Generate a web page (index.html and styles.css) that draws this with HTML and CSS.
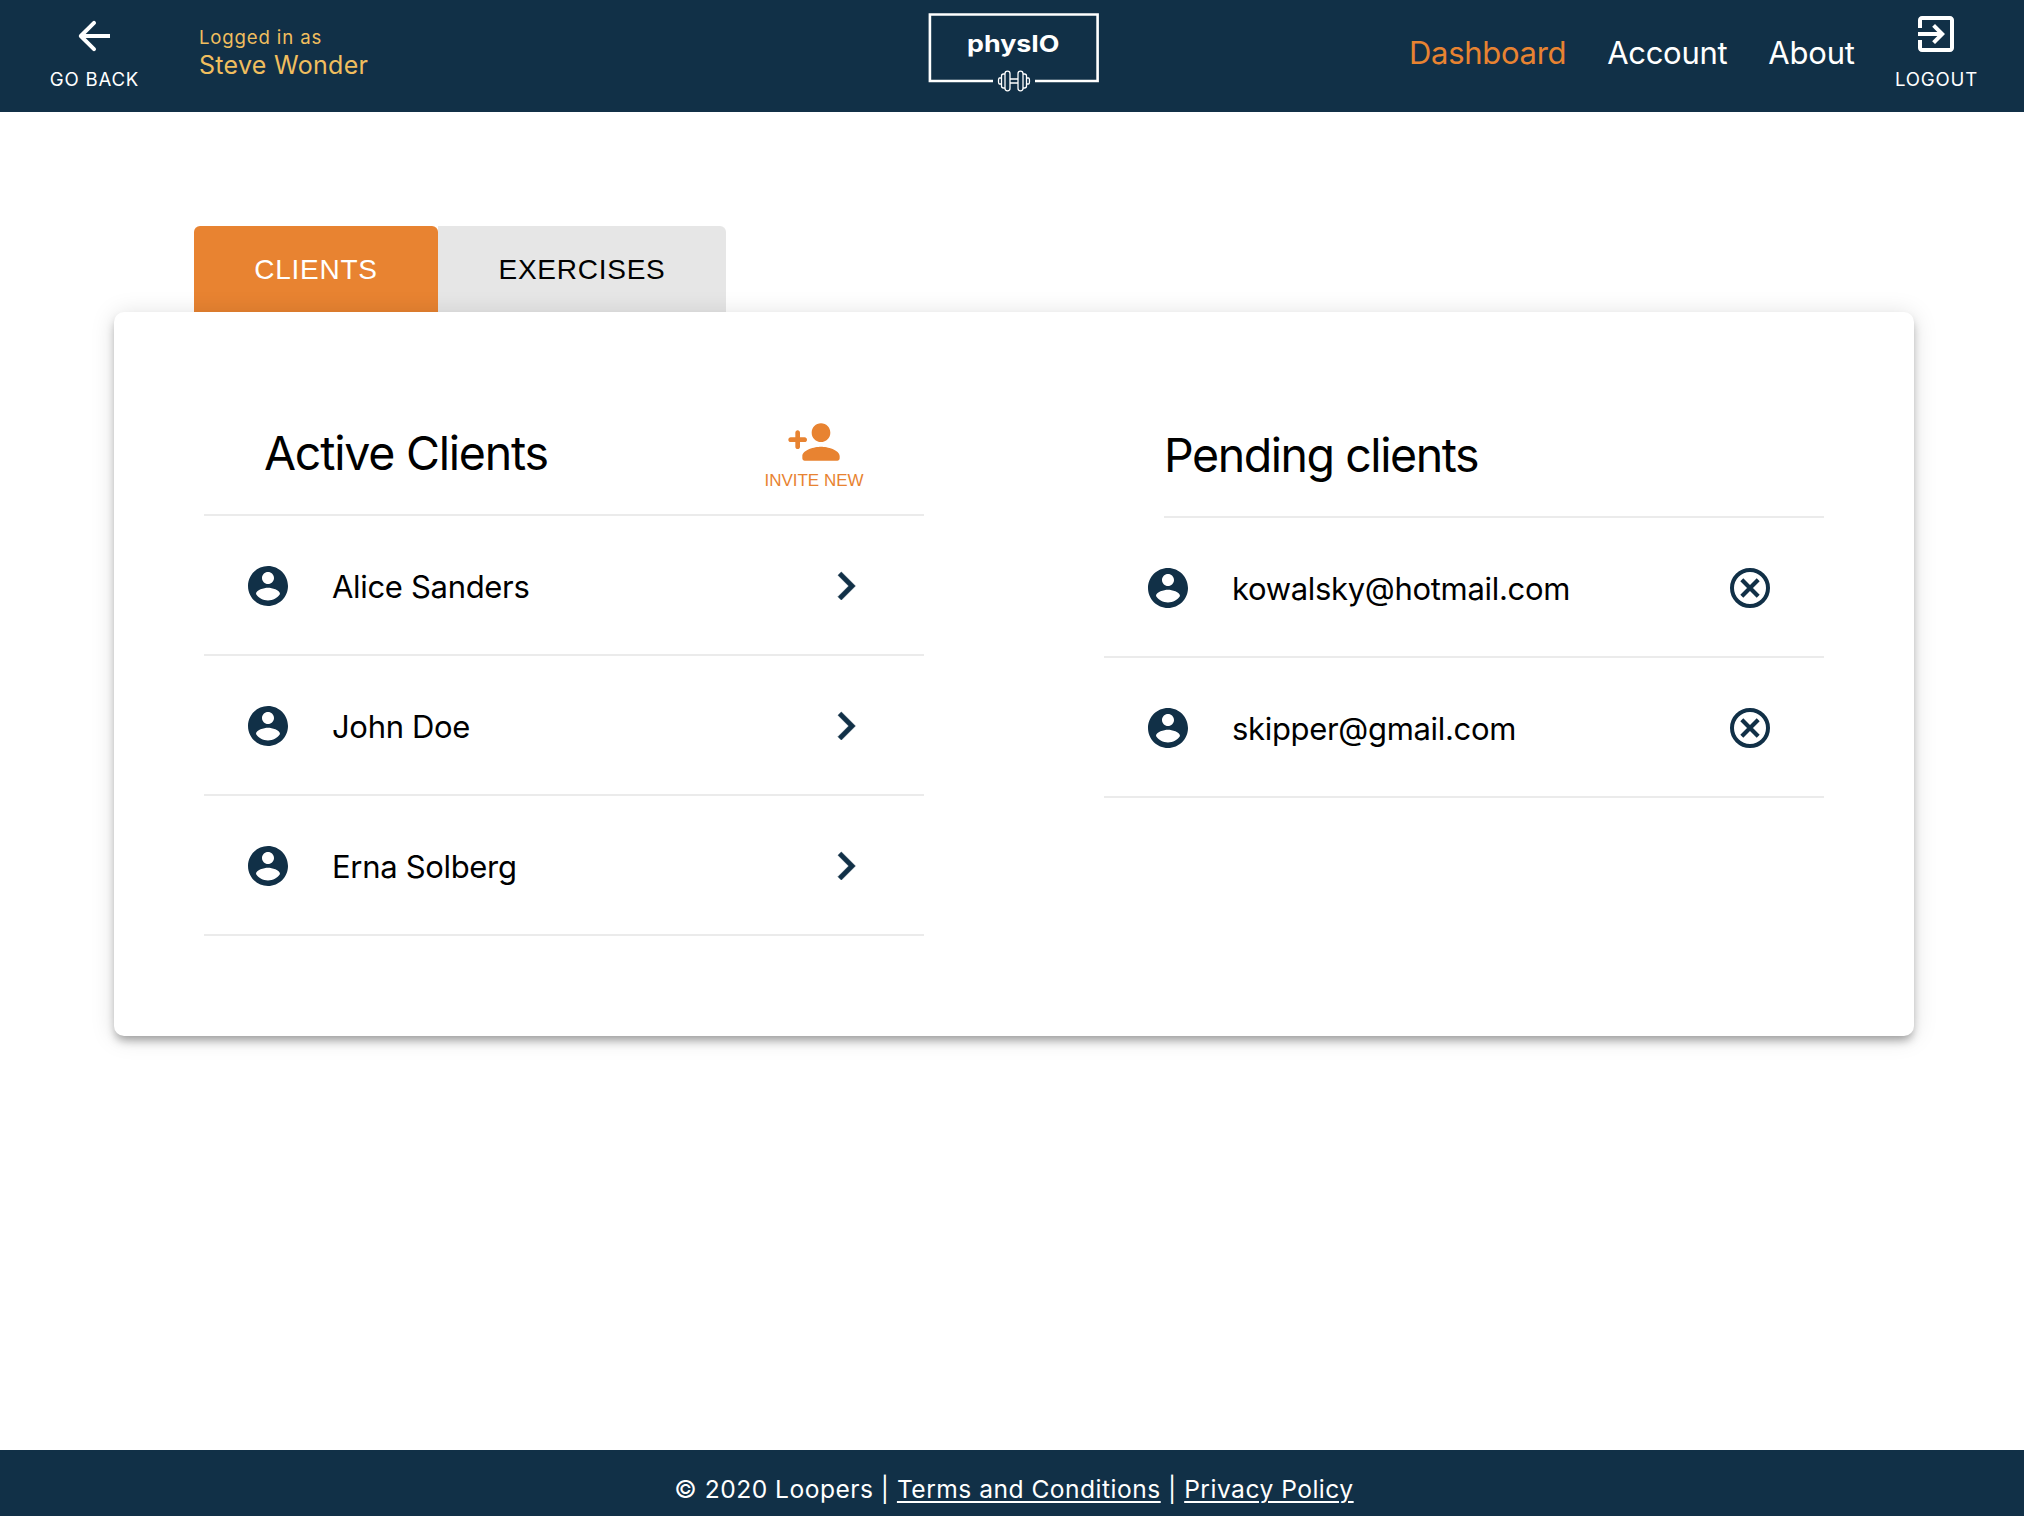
FILE: index.html
```html
<!DOCTYPE html>
<html lang="en">
<head>
<meta charset="utf-8">
<title>physIO – Dashboard</title>
<link rel="stylesheet" href="styles.css">
</head>
<body>
<svg width="0" height="0" class="sprite" aria-hidden="true">
  <symbol id="avatar" viewBox="0 0 24 24"><path d="M12 2C6.48 2 2 6.48 2 12s4.48 10 10 10 10-4.48 10-10S17.52 2 12 2zm0 3c1.66 0 3 1.34 3 3s-1.34 3-3 3-3-1.34-3-3 1.34-3 3-3zm0 14.2c-2.5 0-4.71-1.28-6-3.22.03-1.99 4-3.08 6-3.08 1.99 0 5.97 1.09 6 3.08-1.29 1.94-3.5 3.22-6 3.22z"/></symbol>
  <symbol id="chevron" viewBox="0 0 24 24"><path d="M10 6L8.59 7.41 13.17 12l-4.58 4.59L10 18l6-6z" stroke="currentColor" stroke-width="0.250"/></symbol>
  <symbol id="cancel" viewBox="0 0 48 48"><g fill="none" stroke="currentColor"><circle cx="24" cy="24" r="18" stroke-width="4"/><path d="M15.800 15.800l16.400 16.400M32.200 15.800L15.800 32.200" stroke-width="4.200"/></g></symbol>
</svg>

<header class="header">
  <a class="icon-link back">
    <svg class="icon" viewBox="0 0 24 24"><path d="M20 11H7.83l4.88-4.88c.39-.39.39-1.02 0-1.41-.39-.39-1.02-.39-1.41 0l-6.59 6.59c-.39.39-.39 1.02 0 1.41l6.59 6.59c.39.39 1.02.39 1.41 0 .39-.39.39-1.02 0-1.41L7.83 13H20z"/></svg>
    <span>GO BACK</span>
  </a>
  <div class="user">
    <div class="user-label">Logged in as</div>
    <div class="user-name">Steve Wonder</div>
  </div>
  <svg class="logo" width="172" height="84" viewBox="0 0 172 84">
    <path d="M65 68H1.900V1.500H169.600V68H107" fill="none" stroke="#fff" stroke-width="2.6"/>
    <text x="39" y="39" class="logo-text" textLength="92.500" lengthAdjust="spacingAndGlyphs">physIO</text>
    <g fill="none" stroke="#fff" stroke-width="1.3">
      <rect x="77" y="58.200" width="5" height="19.600" rx="2.500"/>
      <rect x="90" y="58.200" width="5" height="19.600" rx="2.500"/>
      <path d="M77 61h-1.500q-2 0-2 2v10q0 2 2 2H77M95 61h1.500q2 0 2 2v10q0 2-2 2H95M73.500 65h-2q-1 0-1 3t1 3h2M98.500 65h2q1 0 1 3t-1 3h-2M82 66h8M82 70h8"/>
    </g>
  </svg>
  <nav class="nav">
    <a class="nav-link active">Dashboard</a>
    <a class="nav-link">Account</a>
    <a class="nav-link about">About</a>
  </nav>
  <a class="icon-link logout">
    <svg class="icon" viewBox="0 0 24 24"><path d="M10.090 15.590L11.500 17l5-5-5-5-1.410 1.410L12.670 11H3v2h9.670l-2.580 2.590zM19 3H5c-1.110 0-2 .9-2 2v4h2V5h14v14H5v-4H3v4c0 1.100.89 2 2 2h14c1.100 0 2-.9 2-2V5c0-1.100-.9-2-2-2z"/></svg>
    <span>LOGOUT</span>
  </a>
</header>

<main class="main">
  <div class="tabs">
    <button class="tab selected">CLIENTS</button>
    <button class="tab tab-exercises">EXERCISES</button>
  </div>
  <div class="card">
    <section class="column">
      <div class="column-head">
        <h2>Active Clients</h2>
        <a class="invite">
          <svg viewBox="0 0 24 24"><path d="M15 12c2.210 0 4-1.790 4-4s-1.790-4-4-4-4 1.790-4 4 1.790 4 4 4zm-9-2V8c0-.55-.45-1-1-1s-1 .45-1 1v2H2c-.55 0-1 .45-1 1s.45 1 1 1h2v2c0 .55.45 1 1 1s1-.45 1-1v-2h2c.55 0 1-.45 1-1s-.45-1-1-1H6zm9 4c-2.670 0-8 1.340-8 4v1c0 .55.45 1 1 1h14c.55 0 1-.45 1-1v-1c0-2.660-5.330-4-8-4z"/></svg>
          <span>INVITE NEW</span>
        </a>
      </div>
      <div class="row"><svg class="icon"><use href="#avatar"/></svg><span>Alice Sanders</span><svg class="chevron"><use href="#chevron"/></svg></div>
      <div class="row"><svg class="icon"><use href="#avatar"/></svg><span>John Doe</span><svg class="chevron"><use href="#chevron"/></svg></div>
      <div class="row"><svg class="icon"><use href="#avatar"/></svg><span>Erna Solberg</span><svg class="chevron"><use href="#chevron"/></svg></div>
    </section>
    <section class="column">
      <div class="column-head pending"><h2>Pending clients</h2></div>
      <div class="row"><svg class="icon"><use href="#avatar"/></svg><span>kowalsky@hotmail.com</span><svg class="icon"><use href="#cancel"/></svg></div>
      <div class="row"><svg class="icon"><use href="#avatar"/></svg><span>skipper@gmail.com</span><svg class="icon"><use href="#cancel"/></svg></div>
    </section>
  </div>
</main>

<footer class="footer">
  <p>© 2020 Loopers | <a>Terms and Conditions</a> | <a>Privacy Policy</a></p>
</footer>
</body>
</html>
```
FILE: styles.css
```css
* { box-sizing: border-box; }

body {
  margin: 0;
  min-height: 1516px;
  display: flex;
  flex-direction: column;
  background: #fff;
  color: #000;
  font-family: Inter, "Liberation Sans", sans-serif;
}

svg { display: block; flex: none; fill: currentColor; }
.sprite { position: absolute; }
.icon { width: 48px; height: 48px; }

/* Header */
.header {
  height: 112px;
  display: flex;
  align-items: flex-start;
  background: #113047;
  color: #fff;
}
.icon-link {
  width: 100px;
  display: flex;
  flex-direction: column;
  align-items: center;
  font-size: 18.6px;
  line-height: 24px;
  letter-spacing: 0.8px;
  white-space: nowrap;
}
.icon-link span { padding-left: 1px; }
.back { margin-left: 44px; padding-top: 12px; gap: 7px; }
.logout { margin-left: auto; margin-right: 38px; padding-top: 10px; gap: 9px; }
.user {
  width: 727px;
  margin-left: 55px;
  padding-top: 23px;
  line-height: 28px;
  color: #f0be5e;
}
.user-label { font-size: 18.6px; letter-spacing: 0.85px; }
.user-name { font-size: 25px; letter-spacing: 0.3px; }
.logo { margin-top: 13px; margin-left: 2px; }
.logo-text {
  font-family: Inter, sans-serif;
  font-size: 23px;
  font-weight: 700;
  fill: #fff;
}
.nav {
  margin-left: 309px;
  padding-top: 33px;
  display: flex;
  gap: 41px;
  font-size: 31px;
  line-height: 40px;
  letter-spacing: -0.3px;
}
.active { color: #e88331; }
.about { letter-spacing: -0.2px; }

/* Tabs */
.main { flex: 1; padding: 114px 110px 0 114px; }
.tabs { display: flex; padding-left: 80px; }
.tab {
  width: 244px;
  height: 86px;
  padding: 2px 0 0;
  border: 0;
  border-radius: 6px 6px 0 0;
  background: #e6e6e6;
  color: #000;
  font: 28px "Liberation Sans", sans-serif;
  letter-spacing: 0.75px;
}
.tab.selected { background: #e88331; color: #fff; }
.tab-exercises { width: 288px; border-top-left-radius: 0; }

/* Card */
.card {
  position: relative;
  height: 724px;
  padding: 0 90px;
  display: flex;
  gap: 180px;
  border-radius: 10px;
  background: #fff;
  box-shadow: 0 6px 10px -2px rgba(0, 0, 0, 0.35), 0 2px 24px rgba(0, 0, 0, 0.13);
}
.column { width: 720px; }
.column-head {
  height: 204px;
  padding: 102px 60px 0;
  display: flex;
  justify-content: space-between;
  border-bottom: 2px solid #ebebeb;
}
h2 {
  margin: 9px 0 0;
  font-size: 46.5px;
  font-weight: 400;
  line-height: 60px;
  letter-spacing: -1.22px;
}
.invite {
  width: 100px;
  display: flex;
  flex-direction: column;
  align-items: center;
  color: #e88331;
  font: 17px/22px "Liberation Sans", sans-serif;
  white-space: nowrap;
}
.invite svg { width: 56px; height: 56px; }
.pending { height: 206px; margin-left: 60px; padding: 104px 0 0; }
.pending h2 { letter-spacing: -1.45px; }

.row {
  height: 140px;
  padding: 2px 50px 0 40px;
  display: flex;
  align-items: center;
  gap: 40px;
  border-bottom: 2px solid #ebebeb;
  color: #113047;
}
.row span {
  flex: 1;
  color: #000;
  font-size: 31px;
  letter-spacing: -0.32px;
}
.chevron { width: 56px; height: 56px; }

/* Footer */
.footer {
  height: 66px;
  background: #113047;
  color: #fff;
  font-size: 24.6px;
  line-height: 40px;
  letter-spacing: 0.48px;
  text-align: center;
}
.footer p { margin: 0; padding: 19px 0 0 4px; }
.footer a { text-decoration: underline; text-decoration-thickness: 2px; text-underline-offset: 3px; }
```
